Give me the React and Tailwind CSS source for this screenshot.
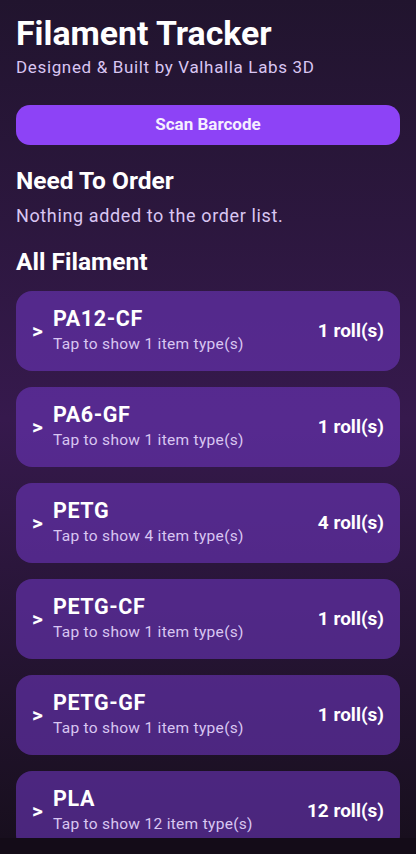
// Filament Tracker — home screen with the filament list
const FILAMENTS = [
  { name: "PA12-CF", types: 1, rolls: 1 },
  { name: "PA6-GF", types: 1, rolls: 1 },
  { name: "PETG", types: 4, rolls: 4 },
  { name: "PETG-CF", types: 1, rolls: 1 },
  { name: "PETG-GF", types: 1, rolls: 1 },
  { name: "PLA", types: 12, rolls: 12 },
];

export default function App() {
  return (
    <div
      className="w-[416px] h-[854px] flex flex-col bg-[#140c18] text-white overflow-hidden"
      style={{ fontFamily: "Roboto, 'Noto Sans', sans-serif" }}
    >
      <div className="h-[838px] overflow-hidden bg-gradient-to-b from-[#21142e] via-[#36194d] to-[#180f1e] px-4 pt-[14px]">
        {/* Header */}
        <h1 className="text-[33.8px] leading-[40px] font-bold">Filament Tracker</h1>
        <p className="text-[17px] leading-[24px] text-[#d9c6f2] tracking-[0.65px] mt-[1px]">
          Designed &amp; Built by Valhalla Labs 3D
        </p>

        <button className="mt-[26px] w-full h-[40px] rounded-[14px] bg-[#8d43f6] text-[17px] font-bold text-[#f5efff]">
          Scan Barcode
        </button>

        {/* Need to order */}
        <h2 className="mt-[22px] text-[24.5px] leading-[28px] font-bold">Need To Order</h2>
        <p className="mt-[9px] text-[18px] leading-[24px] text-[#d9c6f2] tracking-[0.62px]">
          Nothing added to the order list.
        </p>

        {/* All filament */}
        <h2 className="mt-[20px] text-[24.5px] leading-[28px] font-bold">All Filament</h2>

        <div className="mt-[15px] flex flex-col gap-4">
          {FILAMENTS.map((f) => (
            <div
              key={f.name}
              className="h-[80px] shrink-0 rounded-[16px] bg-[#6d35bd]/60 flex items-center pl-4 pr-4"
            >
              <span className="w-[21px] text-[21px] font-bold mt-[2px]">&gt;</span>
              <div className="flex-1 flex flex-col -mt-[4px]">
                <span className="text-[21.5px] leading-[28px] font-bold tracking-[0.6px]">{f.name}</span>
                <span className="text-[15.5px] leading-[20px] text-[#d9c6f2] tracking-[0.3px] mt-[1px]">
                  Tap to show {f.types} item type(s)
                </span>
              </div>
              <span className="text-[19px] font-bold">{f.rolls} roll(s)</span>
            </div>
          ))}
        </div>
      </div>
    </div>
  );
}
